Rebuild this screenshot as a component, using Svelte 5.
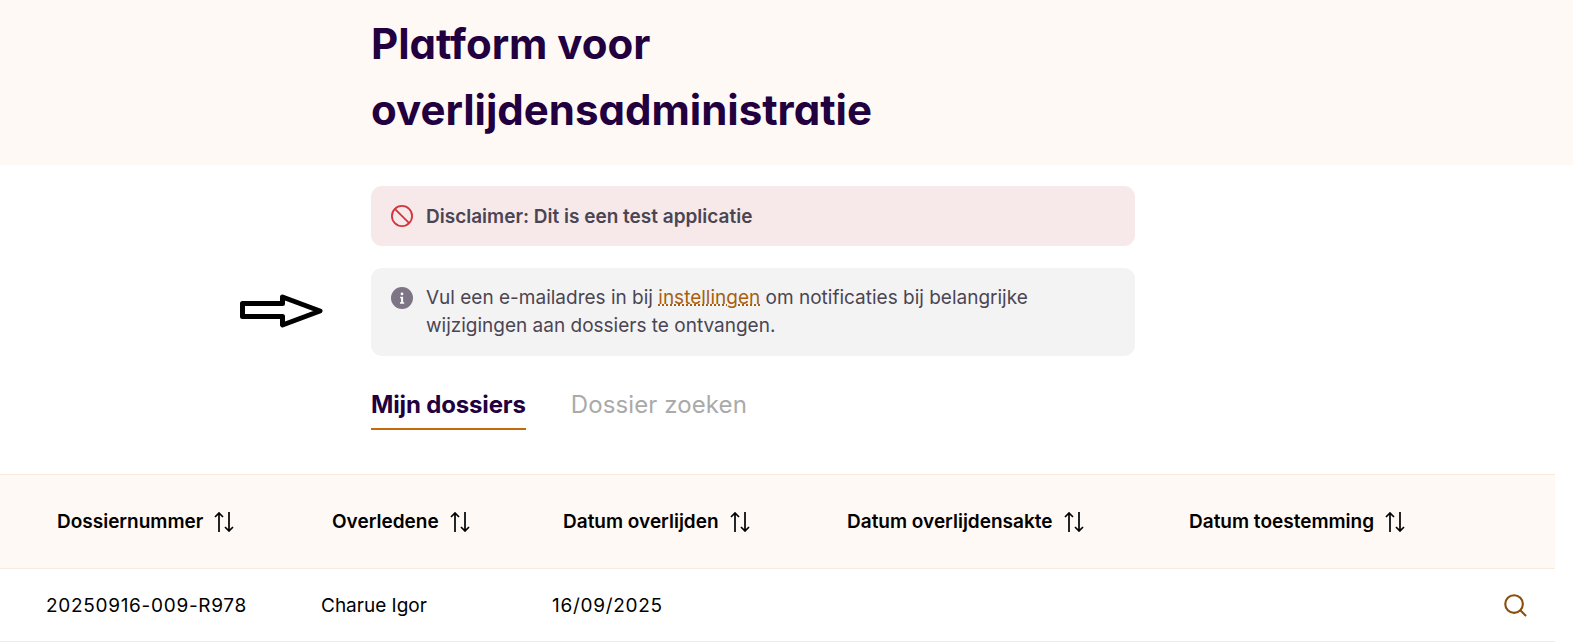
<script>
	const columns = ['Dossiernummer', 'Overledene', 'Datum overlijden', 'Datum overlijdensakte', 'Datum toestemming'];
</script>

<header class="banner">
	<h1>Platform voor<br />overlijdensadministratie</h1>
</header>

<main class="content">
	<div class="alert danger">
		<svg class="alert-icon" viewBox="0 0 24 24" fill="none" stroke="#d2363c" stroke-width="2">
			<circle cx="12" cy="12" r="11" />
			<path d="M4.2 4.2l15.6 15.6" />
		</svg>
		<strong>Disclaimer: Dit is een test applicatie</strong>
	</div>

	<div class="alert info">
		<svg class="alert-icon" viewBox="0 0 24 24">
			<circle cx="12" cy="12" r="12" fill="#7d7486" />
			<circle cx="12" cy="7.6" r="1.5" fill="#fff" />
			<path d="M10 10.6h3.2v6h1.2v1.6H9.8v-1.6h1.2v-4.4h-1z" fill="#fff" />
		</svg>
		<p>Vul een e-mailadres in bij <a href="#instellingen">instellingen</a> om notificaties bij belangrijke wijzigingen aan dossiers te ontvangen.</p>
		<svg class="pointer" viewBox="0 0 84 34" fill="#fff" stroke="#000" stroke-width="5" stroke-linejoin="round">
			<path d="M2.5 9.5h40V3L80 17 42.5 31v-8.5h-40z" />
		</svg>
	</div>

	<nav class="tabs">
		<a class="tab active" href="#mijn">Mijn dossiers</a>
		<a class="tab" href="#zoeken">Dossier zoeken</a>
	</nav>
</main>

<table>
	<thead>
		<tr>
			{#each columns as col}
				<th>
					<span class="th-inner">
						{col}
						<svg class="sort" viewBox="0 0 20 20" fill="none" stroke="#000" stroke-width="1.7">
							<path d="M5 20V1M1 5l4-4 4 4M15 0v19M11 15l4 4 4-4" />
						</svg>
					</span>
				</th>
			{/each}
			<th class="actions"></th>
		</tr>
	</thead>
	<tbody>
		<tr>
			<td class="num">20250916-009-R978</td>
			<td>Charue Igor</td>
			<td class="num">16/09/2025</td>
			<td></td>
			<td></td>
			<td class="actions">
				<svg class="search" viewBox="0 0 24 24" fill="none" stroke="#8a4d0b" stroke-width="2.2">
					<circle cx="10.5" cy="10.5" r="9.2" />
					<path d="M17 17l6 6" />
				</svg>
			</td>
		</tr>
	</tbody>
</table>

<style>
	:global(body) {
		margin: 0;
		background: #fff;
		font-family: 'Inter', 'Liberation Sans', sans-serif;
		color: #000;
		overflow: hidden;
	}

	.banner {
		background: #fff9f5;
		height: 165px;
		padding-left: 371px;
		box-sizing: border-box;
	}

	h1 {
		margin: 0;
		padding-top: 11px;
		font-size: 42px;
		font-weight: 700;
		font-feature-settings: 'cv11';
		line-height: 66px;
		color: #22003f;
	}

	.content {
		width: 764px;
		margin-left: 371px;
		padding-top: 21px;
	}

	.alert {
		position: relative;
		display: flex;
		gap: 13px;
		border-radius: 11px;
		padding: 0 20px;
		font-size: 19px;
		color: #4b4553;
	}

	.alert-icon {
		width: 22px;
		height: 22px;
		flex: none;
	}

	.danger {
		height: 60px;
		align-items: center;
		background: #f7e9e9;
	}

	.danger strong {
		font-weight: 600;
	}

	.info {
		margin-top: 22px;
		height: 88px;
		box-sizing: border-box;
		padding-top: 16px;
		background: #f3f3f3;
	}

	.info .alert-icon {
		margin-top: 3px;
	}

	.info p {
		margin: 0;
		line-height: 28px;
		width: 640px;
		font-weight: 400;
	}

	.info a {
		color: #a85f10;
		text-decoration: underline dotted;
	}

	/* annotation arrow drawn on top of the screenshot */
	.pointer {
		position: absolute;
		left: -131px;
		top: 26px;
		width: 84px;
		height: 34px;
	}

	.tabs {
		display: flex;
		gap: 45px;
		margin-top: 33px;
	}

	.tab {
		padding-bottom: 7px;
		font-size: 24px;
		line-height: 32px;
		letter-spacing: 0.1px;
		text-decoration: none;
		color: #aaa;
	}

	.tab.active {
		font-weight: 700;
		letter-spacing: -0.15px;
		color: #22003f;
		border-bottom: 2px solid #c46a0c;
	}

	table {
		width: 1555px;
		margin-top: 44px;
		border-collapse: collapse;
		table-layout: fixed;
	}

	thead tr {
		background: #fff9f5;
		height: 94px;
		border-top: 1px solid #f9ebdc;
		border-bottom: 1px solid #f9ebdc;
	}

	th {
		padding: 0 0 0 57px;
		text-align: left;
		font-size: 19px;
		font-weight: 600;
	}

	th:nth-child(1) { width: 275px; }
	th:nth-child(2) { width: 231px; }
	th:nth-child(3) { width: 284px; }
	th:nth-child(4) { width: 342px; }

	th,
	td {
		box-sizing: border-box;
	}

	.th-inner {
		display: inline-flex;
		align-items: center;
		gap: 11px;
		white-space: nowrap;
	}

	.sort {
		width: 20px;
		height: 20px;
	}

	tbody tr {
		height: 73px;
		border-bottom: 1px solid #f9ebdc;
	}

	td {
		padding: 0 0 0 46px;
		font-size: 19px;
		white-space: nowrap;
	}

	td.num {
		letter-spacing: 0.7px;
	}

	th.actions,
	td.actions {
		padding: 0;
		width: 70px;
	}

	.search {
		display: block;
		width: 23px;
		height: 23px;
		margin-left: 19px;
	}
</style>
